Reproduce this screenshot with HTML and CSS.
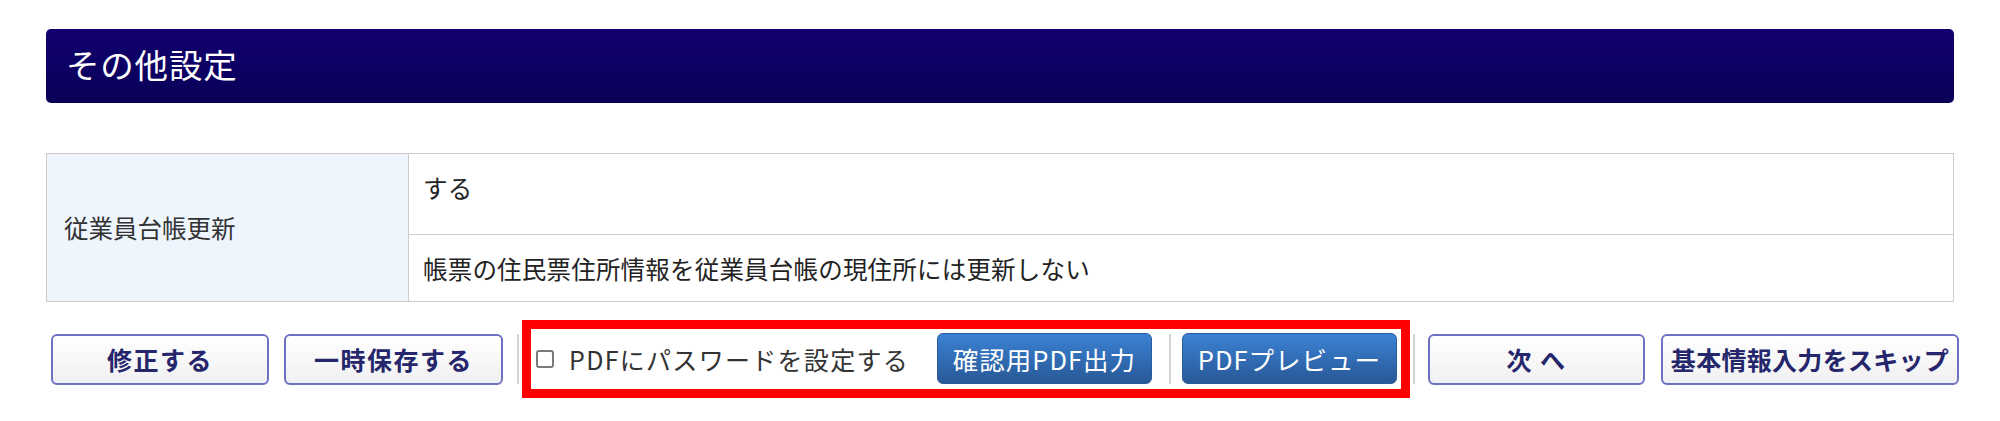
FILE: index.html
```html
<!DOCTYPE html>
<html lang="ja">
<head>
  <meta charset="UTF-8">
  <title>その他設定</title>
  <link rel="stylesheet" href="styles.css">
</head>
<body>

<div class="page">
  <div class="section-title">その他設定</div>

  <table class="settings">
    <tr class="row-first">
      <th rowspan="2">従業員台帳更新</th>
      <td>する</td>
    </tr>
    <tr class="row-second">
      <td>帳票の住民票住所情報を従業員台帳の現住所には更新しない</td>
    </tr>
  </table>

  <div class="actions">
    <button class="btn btn-white btn-fix">修正する</button>
    <button class="btn btn-white btn-save">一時保存する</button>
    <span class="sep sep-first"></span>

    <div class="pdf-group">
      <label class="pdf-check">
        <input type="checkbox">
        <span>PDFにパスワードを設定する</span>
      </label>
      <button class="btn btn-blue">確認用PDF出力</button>
      <span class="sep sep-inner"></span>
      <button class="btn btn-blue">PDFプレビュー</button>
    </div>

    <span class="sep sep-last"></span>
    <button class="btn btn-white btn-next">次 へ</button>
    <button class="btn btn-white btn-skip">基本情報入力をスキップ</button>
  </div>
</div>

</body>
</html>
```

FILE: styles.css
```css
body {
  margin: 0;
  background: #ffffff;
  font-family: "Noto Sans CJK JP", "Noto Sans", sans-serif;
  color: #333333;
  overflow: hidden;
}

.page {
  padding: 29px 46px 0;
}

.section-title {
  height: 74px;
  box-sizing: border-box;
  display: flex;
  align-items: center;
  padding: 0 0 5px 20px;
  border-radius: 5px;
  background: linear-gradient(#110070, #090056);
  color: #ffffff;
  font-size: 33.5px;
  letter-spacing: 0.8px;
}

.settings {
  width: 100%;
  margin-top: 50px;
  border-collapse: collapse;
  font-size: 24.5px;
}

.settings th,
.settings td {
  border: 1px solid #cccccc;
  text-align: left;
  font-weight: normal;
  padding: 0 0 0 14px;
}

.settings th {
  width: 344px;
  padding-left: 17px;
  background: #eef5fd;
  color: #333333;
}

.settings td {
  color: #222222;
  letter-spacing: 0.2px;
}

.row-first td {
  height: 66px;
  padding-bottom: 14px;
}

.row-second td {
  height: 66px;
}

.actions {
  display: flex;
  align-items: center;
  margin-top: 18px;
  margin-left: 5px;
  width: 2000px;
}

.btn {
  height: 51px;
  box-sizing: border-box;
  font-family: inherit;
  font-size: 25px;
  border-radius: 6px;
  cursor: pointer;
  padding: 0;
  flex: none;
}

.btn-white {
  border: 2px solid #6d72c6;
  background: linear-gradient(#ffffff, #f0f0f2);
  color: #25266b;
  font-weight: bold;
  letter-spacing: 1.5px;
}

.btn-fix { width: 218px; }
.btn-save { width: 219px; margin-left: 15px; }
.btn-next { width: 217px; margin-left: 13px; }
.btn-skip { width: 298px; margin-left: 16px; letter-spacing: 0.3px; }

.btn-blue {
  width: 215px;
  border: 1px solid #2a5c9c;
  background: linear-gradient(#3b82d4, #285896);
  color: #ffffff;
  font-weight: normal;
  font-size: 25.5px;
  letter-spacing: 1px;
}

.sep {
  width: 2px;
  height: 50px;
  background: #d4d4d4;
  flex: none;
}

.sep-first { margin-left: 14px; }
.sep-inner { margin: 0 11px 0 17px; }
.sep-last { margin-left: 3px; }

.pdf-group {
  display: flex;
  align-items: center;
  margin-left: 3px;
  padding: 4px 4px 5px 5px;
  border: 9px solid #ff0000;
}

.pdf-check {
  width: 401px;
  display: flex;
  align-items: center;
  font-size: 25px;
  letter-spacing: 1.3px;
  color: #333333;
}

.pdf-check input {
  appearance: none;
  -webkit-appearance: none;
  width: 18px;
  height: 18px;
  box-sizing: border-box;
  border: 2px solid #7a7a7a;
  border-radius: 3px;
  background: #ffffff;
  margin: 0 15px 0 0;
}
```
